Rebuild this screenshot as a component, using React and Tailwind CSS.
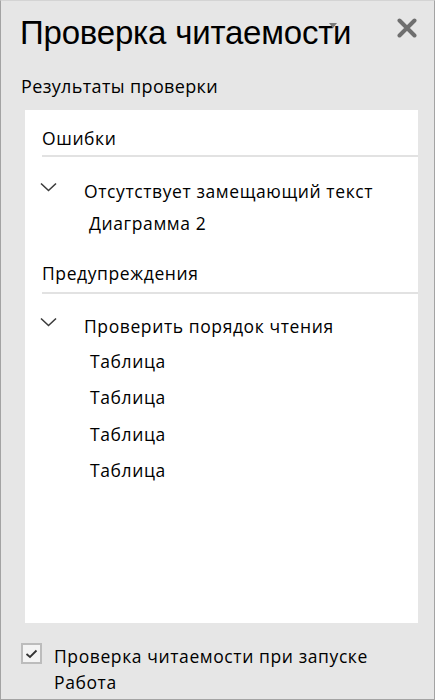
import React from "react";

const titleFont = { fontFamily: '"Liberation Sans", Arial, sans-serif' };
const bodyFont = { fontFamily: '"Open Sans", "Noto Sans", sans-serif' };

function Chevron() {
  return (
    <svg width="17" height="10" viewBox="0 0 17 10" className="shrink-0">
      <path d="M1 1.5 L8.5 8.5 L16 1.5" fill="none" stroke="#3c3c3c" strokeWidth="1.6" />
    </svg>
  );
}

function CloseIcon() {
  return (
    <svg width="22" height="20" viewBox="0 0 22 20">
      <path d="M3.5 2.5 L18.5 17.5 M18.5 2.5 L3.5 17.5" stroke="#6f6f6f" strokeWidth="4" strokeLinecap="round" />
    </svg>
  );
}

export default function App() {
  return (
    <div
      className="w-[435px] h-[700px] bg-[#e6e6e6] border border-[#a3a3a3] border-t-[#d4d4d4] flex flex-col text-black"
      style={bodyFont}
    >
      {/* Header */}
      <div className="relative flex items-start pt-[12px] pl-[19px] pr-[19px]" style={titleFont}>
        <div className="text-[33px] leading-[40px] tracking-[-0.2px] flex-1 whitespace-nowrap">
          Проверка читаемости
        </div>
        <div className="absolute left-[328px] top-[22px] w-0 h-0 border-l-[4px] border-r-[4px] border-t-[5px] border-l-transparent border-r-transparent border-t-[#7a7a7a]" />
        <button className="mt-[5px] mr-[-3px]">
          <CloseIcon />
        </button>
      </div>

      {/* Section label */}
      <div className="mt-[21px] pl-[20px] text-[18px] leading-[24px] tracking-[0.36px]">Результаты проверки</div>

      {/* Results panel */}
      <div className="mt-[12px] ml-[24px] mr-[16px] h-[513px] bg-white pt-[16px] text-[17.5px] leading-[24px] tracking-[0.6px]">
        <div className="ml-[17px] pb-[5px] border-b-2 border-[#e2e2e2]">Ошибки</div>

        <div className="mt-[22px] flex items-start">
          <div className="ml-[15px] mt-[3px] w-[44px]">
            <Chevron />
          </div>
          <div>Отсутствует замещающий текст</div>
        </div>
        <div className="mt-[8px] pl-[64px]">Диаграмма 2</div>

        <div className="mt-[26px] ml-[17px] pb-[7px] border-b-2 border-[#e2e2e2]">Предупреждения</div>

        <div className="mt-[20px] flex items-start">
          <div className="ml-[15px] mt-[3px] w-[44px]">
            <Chevron />
          </div>
          <div>Проверить порядок чтения</div>
        </div>
        <div className="mt-[11px] pl-[65px] flex flex-col gap-[12.3px]">
          <div>Таблица</div>
          <div>Таблица</div>
          <div>Таблица</div>
          <div>Таблица</div>
        </div>
      </div>

      {/* Footer option */}
      <div className="mt-[20px] pl-[20px] flex items-start text-[17.5px] leading-[26px] tracking-[0.6px]">
        <div className="w-[21px] h-[21px] border-2 border-[#bcbcbc] bg-[#f4f4f4] flex items-center justify-center shrink-0">
          <svg width="13" height="10" viewBox="0 0 13 10">
            <path d="M1.5 5 L5 8 L11.5 1.5" fill="none" stroke="#333" strokeWidth="1.8" />
          </svg>
        </div>
        <div className="ml-[12px]">
          <div>Проверка читаемости при запуске</div>
          <div>Работа</div>
        </div>
      </div>
    </div>
  );
}
